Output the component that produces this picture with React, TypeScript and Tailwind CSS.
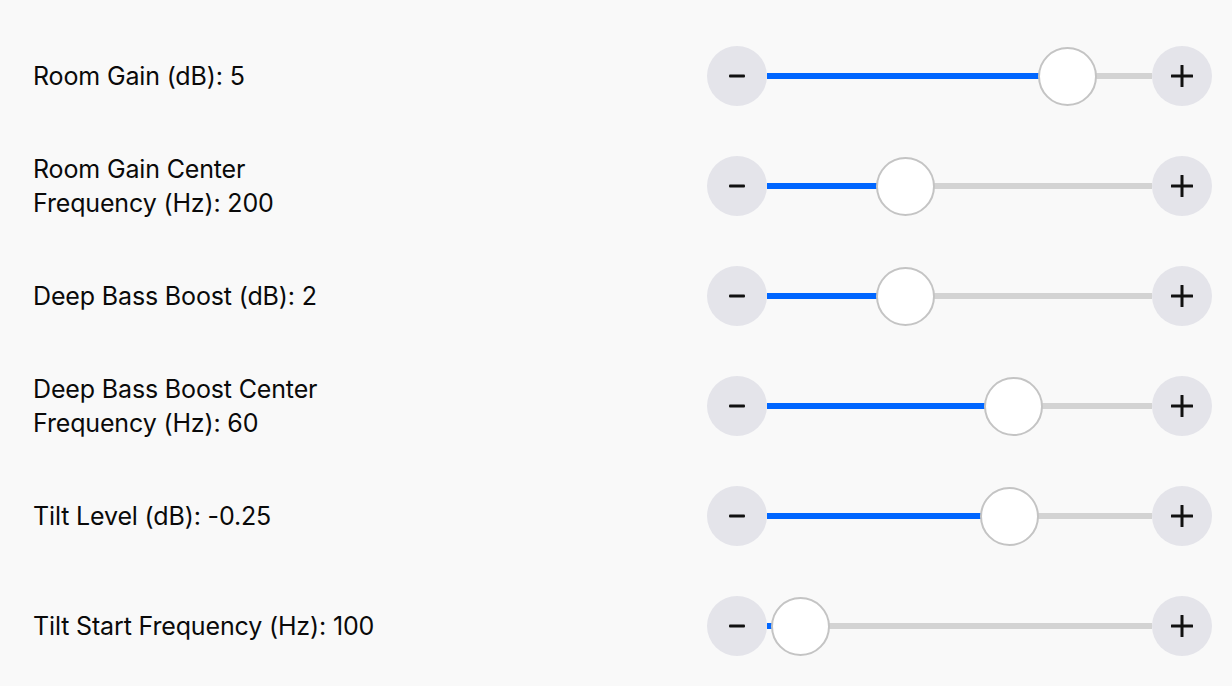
import React from "react";

const rows: { label: string[]; pos: number }[] = [
  { label: ["Room Gain (dB): 5"], pos: 271 },
  { label: ["Room Gain Center", "Frequency (Hz): 200"], pos: 109 },
  { label: ["Deep Bass Boost (dB): 2"], pos: 109 },
  { label: ["Deep Bass Boost Center", "Frequency (Hz): 60"], pos: 217 },
  { label: ["Tilt Level (dB): -0.25"], pos: 213 },
  { label: ["Tilt Start Frequency (Hz): 100"], pos: 4 },
];

function Minus() {
  return (
    <svg width="18" height="18" viewBox="0 0 18 18">
      <rect x="1" y="7.5" width="16" height="3" rx="1" fill="#111" />
    </svg>
  );
}

function Plus() {
  return (
    <svg width="22" height="22" viewBox="0 0 22 22">
      <rect x="0" y="9.5" width="22" height="3" rx="0.5" fill="#111" />
      <rect x="9.5" y="0" width="3" height="22" rx="0.5" fill="#111" />
    </svg>
  );
}

function Slider({ pos }: { pos: number }) {
  return (
    <div className="flex items-center w-[505px]">
      <button className="w-[60px] h-[60px] rounded-full bg-[#e4e4ea] flex items-center justify-center shrink-0">
        <Minus />
      </button>
      <div className="relative flex-1 h-[60px] flex items-center">
        <div className="w-full h-[6px] bg-[#d3d3d3]" />
        <div
          className="absolute left-0 top-[27px] h-[6px] bg-[#0066ff]"
          style={{ width: pos + 2 }}
        />
        <div
          className="absolute top-[1px] w-[59px] h-[59px] rounded-full bg-white border-2 border-[#c4c4c4]"
          style={{ left: pos }}
        />
      </div>
      <button className="w-[60px] h-[60px] rounded-full bg-[#e4e4ea] flex items-center justify-center shrink-0">
        <Plus />
      </button>
    </div>
  );
}

export default function App() {
  return (
    <div
      className="w-[1232px] h-[686px] bg-[#f9f9f9] pt-[21px] pl-[33px] pr-[20px] text-[#0a0a0a]"
      style={{ fontFamily: "Inter, 'Noto Sans', sans-serif" }}
    >
      {rows.map((r, i) => (
        <div key={i} className="h-[110px] flex items-center justify-between">
          <div className="text-[25px] leading-[34px] tracking-[-0.15px] whitespace-nowrap">
            {r.label.map((l, j) => (
              <div key={j}>{l}</div>
            ))}
          </div>
          <Slider pos={r.pos} />
        </div>
      ))}
    </div>
  );
}
